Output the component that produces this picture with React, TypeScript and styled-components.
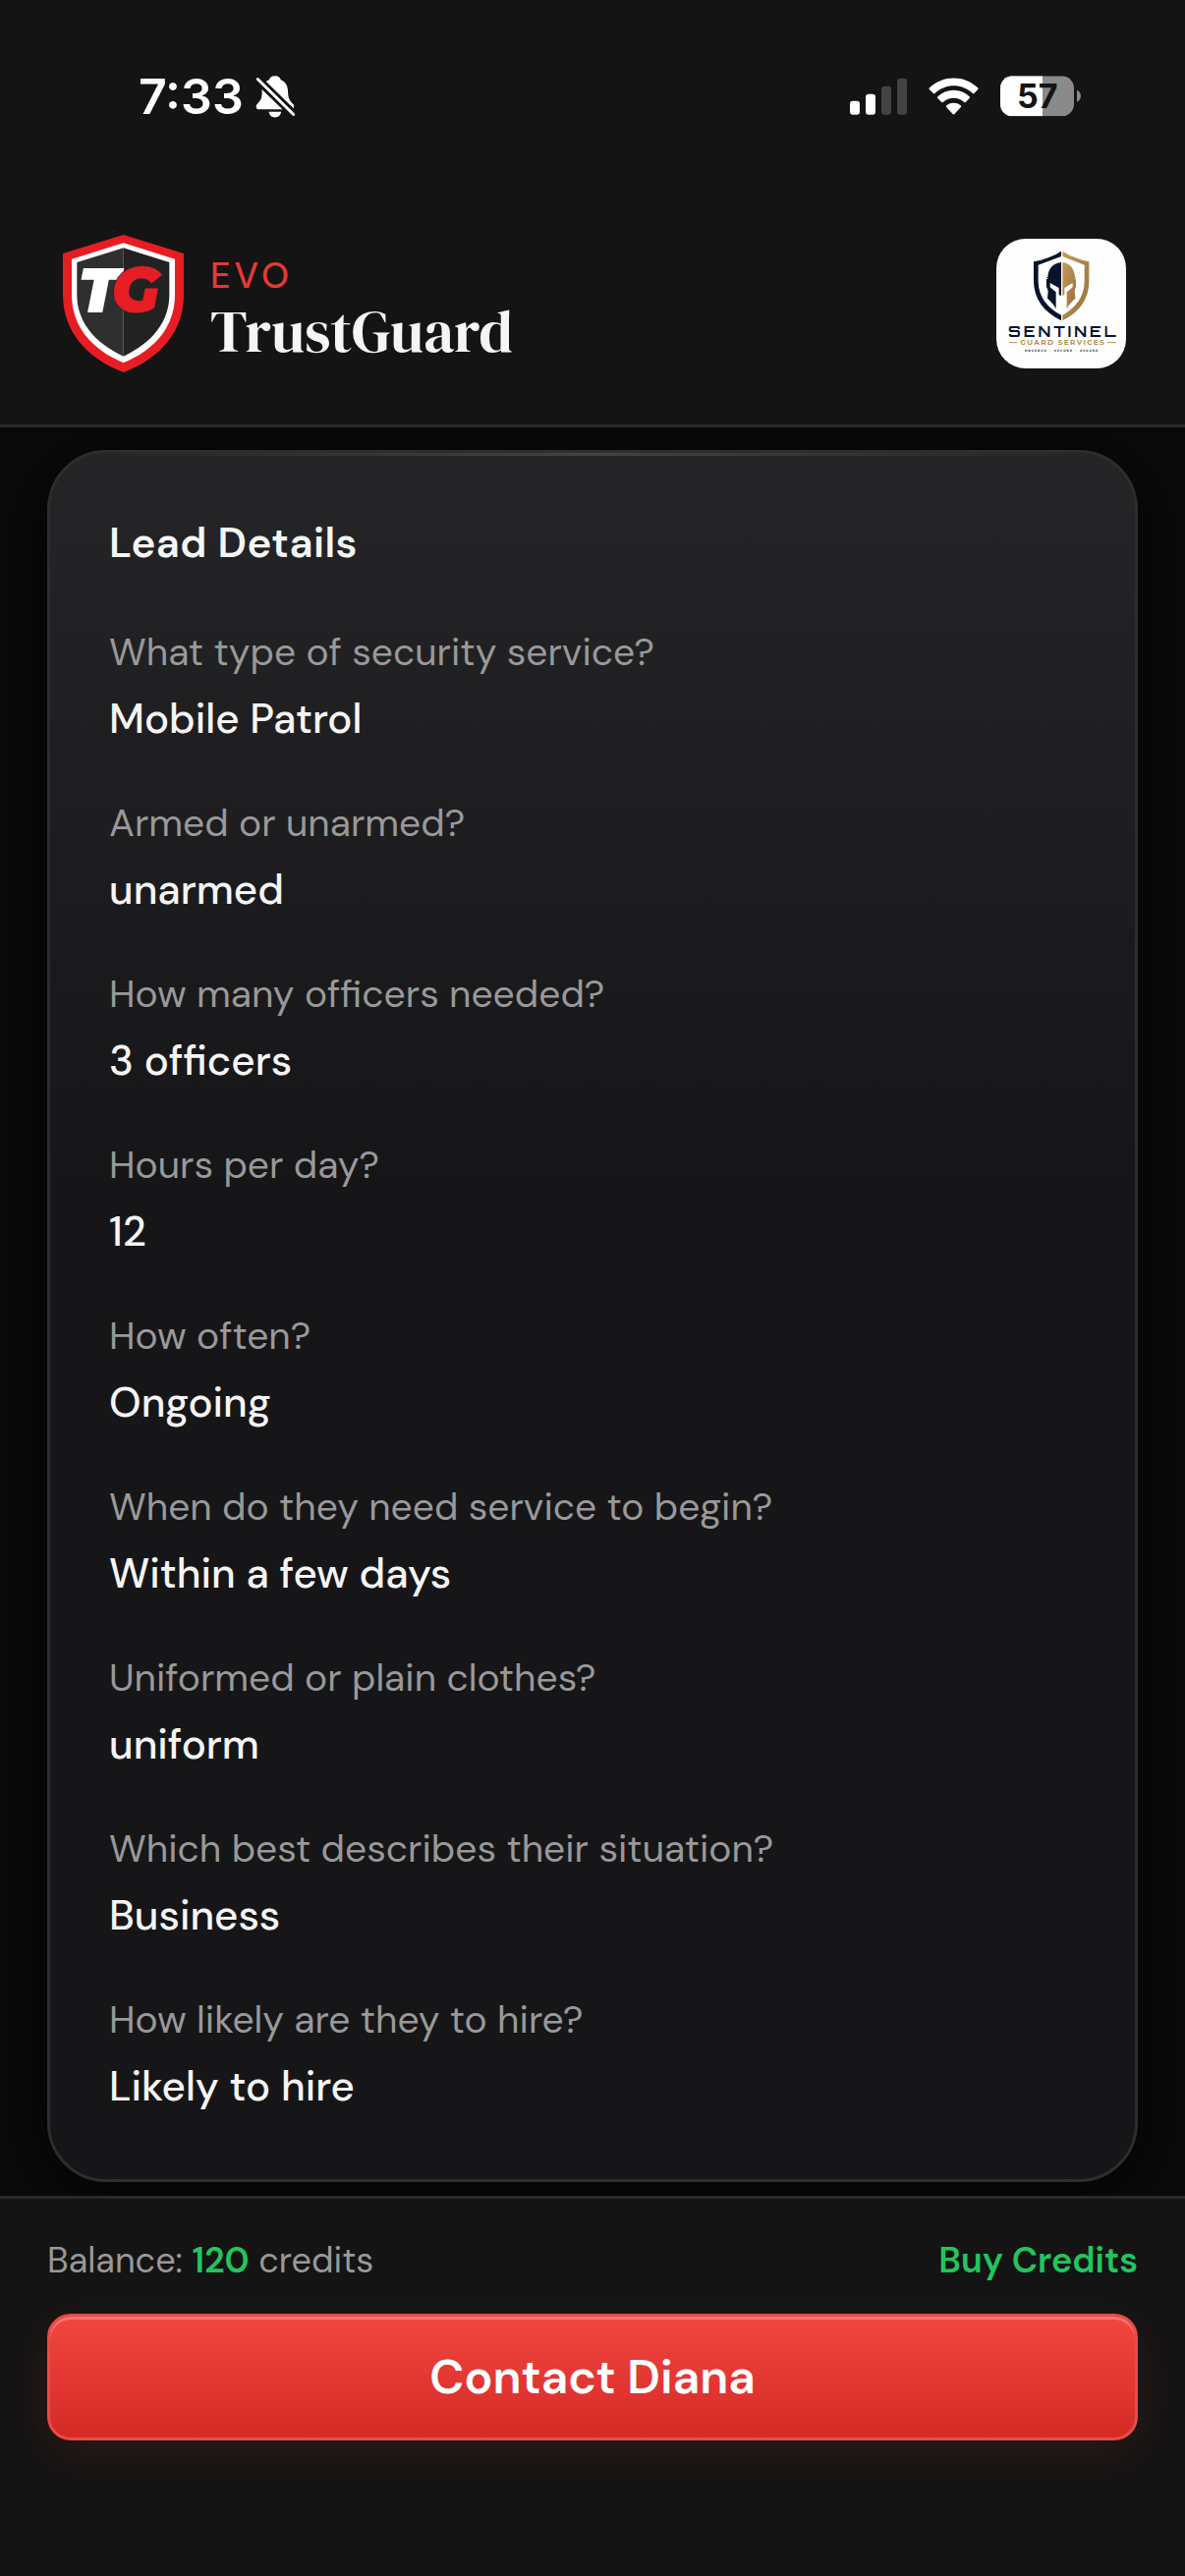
import React from "react";
import styled, { createGlobalStyle } from "styled-components";

const sans = `"DM Sans", Lato, "Open Sans", sans-serif`;
const system = `Inter, Roboto, sans-serif`;

const GlobalStyle = createGlobalStyle`
  *, *::before, *::after { box-sizing: border-box; }
  body {
    margin: 0;
    background: #0a0a0a;
    color: #f5f5f5;
    font-family: ${sans};
  }
`;

const Screen = styled.div`
  display: flex;
  flex-direction: column;
  min-height: 100vh;
`;

const TopArea = styled.header`
  position: relative;
  z-index: 1;
  background: #141414;
  border-bottom: 3px solid #292929;
`;

const StatusBar = styled.div`
  display: flex;
  align-items: center;
  justify-content: space-between;
  height: 195px;
  padding: 0 106px 0 141px;
`;

const StatusGroup = styled.div<{ $gap: number }>`
  display: flex;
  align-items: center;
  gap: ${(p) => p.$gap}px;
`;

const Clock = styled.time`
  font: 600 50px/60px ${system};
  color: #fff;
`;

const BrandBar = styled.div`
  display: flex;
  align-items: center;
  justify-content: space-between;
  padding: 44px 60px 53px;
`;

const Brand = styled.div`
  display: flex;
  align-items: center;
  gap: 24px;
`;

const BrandText = styled.div`
  display: flex;
  flex-direction: column;
  padding-top: 8px;
`;

const BrandKicker = styled.span`
  font-size: 36px;
  line-height: 48px;
  font-weight: 500;
  letter-spacing: 4px;
  color: #e53935;
`;

const BrandName = styled.span`
  font: 400 60px/64px "DM Serif Display", "Liberation Serif", serif;
  color: #f5f5f5;
`;

const ClientBadge = styled.div`
  display: flex;
  width: 132px;
  height: 132px;
  border-radius: 30px;
  background: #fefefe;
  overflow: hidden;
`;

const Main = styled.main`
  flex: 1;
  padding: 23px 48px 13px;
`;

const Card = styled.section`
  position: relative;
  padding: 60px 60px 63px;
  border: 3px solid #2d2d2f;
  border-radius: 60px;
  background: linear-gradient(180deg, #252527 0%, #161618 42%, #161618 100%);
  box-shadow: 0 12px 72px rgba(0, 0, 0, 0.7);

  &::before {
    content: "";
    position: absolute;
    top: 0;
    left: 42px;
    right: 42px;
    height: 3px;
    background: linear-gradient(90deg, transparent, #434345, transparent);
  }
`;

const CardTitle = styled.h2`
  margin: 0 0 50px;
  font-size: 42px;
  line-height: 64px;
  font-weight: 600;
  letter-spacing: 0.01em;
`;

const FieldList = styled.dl`
  display: flex;
  flex-direction: column;
  gap: 46px;
  margin: 0;
`;

const Field = styled.div`
  display: flex;
  flex-direction: column;
  gap: 8px;
`;

const Question = styled.dt`
  font-size: 39px;
  line-height: 58px;
  color: #999;
`;

const Answer = styled.dd`
  margin: 0;
  font-size: 42px;
  line-height: 62px;
  font-weight: 500;
`;

const ActionBar = styled.footer`
  position: relative;
  z-index: 1;
  display: flex;
  flex-direction: column;
  gap: 27px;
  padding: 36px 48px 138px;
  border-top: 3px solid #2a2a2a;
  background: #141414;
`;

const BalanceRow = styled.div`
  display: flex;
  justify-content: space-between;
  font-size: 36px;
  line-height: 54px;
`;

const Balance = styled.span`
  color: #999;

  strong {
    font-weight: 600;
    color: #22c55e;
  }
`;

const BuyLink = styled.a`
  color: #22c55e;
  font-weight: 600;
  text-decoration: none;
`;

const ContactButton = styled.button`
  height: 129px;
  padding: 0;
  border: 3px solid #e84b46;
  border-radius: 24px;
  background: linear-gradient(180deg, #f2463f 0%, #e53935 45%, #d42a26 100%);
  box-shadow: inset 0 3px 0 rgba(255, 255, 255, 0.26), 0 12px 48px rgba(229, 57, 53, 0.12);
  color: #fff;
  font: 600 48px/60px ${sans};
  cursor: pointer;
`;

const MutedBell = () => (
  <svg width="41" height="44" viewBox="480 78 124 132" role="img" aria-label="Silent mode">
    <path
      fill="#fff"
      d="M540 81C551 81 556 87 558 93C574 100 580 113 580 131C581 152 585 157 596 168C601 174 598 184 590 184H490C481 184 480 173 485 168C497 157 500 150 500 130C500 112 507 99 522 93C525 86 530 81 540 81Z"
    />
    <path fill="#fff" d="M521 192H559C557 204 550 209 540 209C530 209 523 204 521 192Z" />
    <path stroke="#141414" strokeWidth="26" d="M474 79L610 212" />
    <path stroke="#fff" strokeWidth="9" strokeLinecap="round" d="M487 91L597 200" />
  </svg>
);

const Signal = () => (
  <svg width="58" height="38" viewBox="75 85 174 114" role="img" aria-label="Signal">
    <rect x="75" y="156" width="30" height="42" rx="9" fill="#fff" />
    <rect x="123" y="135" width="30" height="63" rx="9" fill="#fff" />
    <rect x="171" y="111" width="30" height="87" rx="9" fill="#434343" />
    <rect x="219" y="87" width="30" height="111" rx="9" fill="#434343" />
  </svg>
);

const Wifi = () => (
  <svg width="51" height="38" viewBox="315 85 153 114" role="img" aria-label="Wi-Fi">
    <g fill="#fff">
      <path d="M318 116C360 77 424 77 465 116C468 118 467 120 465 122L455 132C453 134 451 134 449 132C416 102 368 102 335 132C333 134 331 134 329 132L318 122C316 120 316 118 318 116Z" />
      <path d="M344 142C372 117 412 117 439 142C442 144 442 146 440 148L429 159C427 161 425 161 423 159C404 143 379 143 360 159C358 161 356 161 354 159L343 148C341 146 342 144 344 142Z" />
      <path d="M370 170C383 160 401 160 413 170C415 172 415 174 413 176L395 195C393 198 390 198 388 195L370 176C368 174 368 172 370 170Z" />
    </g>
  </svg>
);

const Battery = () => (
  <svg width="82" height="42" viewBox="534 80 246 126" role="img" aria-label="Battery">
    <defs>
      <clipPath id="battery-shell">
        <rect x="534" y="81" width="225" height="123" rx="37" />
      </clipPath>
    </defs>
    <g clipPath="url(#battery-shell)">
      <rect x="534" y="81" width="225" height="123" fill="#8a8a8a" />
      <rect x="534" y="81" width="129" height="123" fill="#fff" />
    </g>
    <path fill="#8a8a8a" d="M768 124C784 130 784 154 768 160Z" />
    <text x="647" y="180" textAnchor="middle" fontFamily="Inter, sans-serif" fontWeight="700" fontSize="102" fill="#141414">
      57
    </text>
  </svg>
);

const ShieldLogo = () => (
  <svg width="130" height="140" viewBox="60 57 390 420" role="img" aria-label="TrustGuard logo">
    <path fill="#e71d24" d="M257 57L441 114V240C441 350 372 433 257 477C142 433 72 350 72 240V114Z" />
    <path fill="#fff" d="M257 82L414 131V240C414 334 357 406 257 448C157 406 99 334 99 240V131Z" />
    <path fill="#2f2f2f" d="M257 97V428C167 386 115 322 115 240V141Z" />
    <path fill="#222" d="M257 97L397 141V240C397 322 345 386 257 428Z" />
    <text x="118" y="293" fontFamily="Montserrat, Inter, sans-serif" fontWeight="900" fontStyle="italic" fontSize="192" fill="#fff">
      T
      <tspan dx="-24" fill="#e71d24" stroke="#2a2a2a" strokeWidth="4" paintOrder="stroke">
        G
      </tspan>
    </text>
  </svg>
);

const SentinelLogo = () => (
  <svg width="132" height="132" viewBox="72 69 396 396" role="img" aria-label="Sentinel Guard Services">
    <defs>
      <linearGradient id="gold" x1="0" y1="0" x2="1" y2="1">
        <stop offset="0" stopColor="#c49a5a" />
        <stop offset="1" stopColor="#97703a" />
      </linearGradient>
    </defs>
    <g fill="#07142b">
      <path d="M270 107V123L200 149V200C201 245 226 279 270 302V319C216 292 187 252 186 200V139C217 133 245 123 270 107Z" />
      <path d="M270 141V243L263 240V219L236 204V217L254 232V283C248 270 237 259 228 251L230 229L225 215V192H231L224 187H229C230 160 246 143 270 141Z" />
    </g>
    <g fill="url(#gold)">
      <path d="M274 107V123L341 149V200C340 245 316 279 274 302V319C328 292 354 252 355 200V139C327 133 299 123 274 107Z" />
      <path d="M274 141V243L280 240V219L305 204V217L287 232V283C293 270 304 259 313 251L311 229L315 215V192H309L317 187H312C311 160 296 143 274 141Z" />
    </g>
    <g textAnchor="middle" fontFamily="'DejaVu Sans', sans-serif" fontWeight="700">
      <text x="277" y="368" fontFamily="Orbitron, 'DejaVu Sans', sans-serif" fontSize="46" letterSpacing="9" fill="#07142b">SENTINEL</text>
      <text x="275" y="393" fontFamily="Montserrat, Lato, sans-serif" fontSize="22" letterSpacing="4" fill="#b98f52">GUARD SERVICES</text>
      <text x="272" y="413" fontSize="9" letterSpacing="3" fill="#2b3548">
        OBSERVE <tspan fill="#b98f52">•</tspan> SECURE <tspan fill="#b98f52">•</tspan> ASSURE
      </text>
    </g>
    <path stroke="#b98f52" strokeWidth="3" d="M110 386H136M411 386H437" />
  </svg>
);

const fields = [
  ["What type of security service?", "Mobile Patrol"],
  ["Armed or unarmed?", "unarmed"],
  ["How many officers needed?", "3 officers"],
  ["Hours per day?", "12"],
  ["How often?", "Ongoing"],
  ["When do they need service to begin?", "Within a few days"],
  ["Uniformed or plain clothes?", "uniform"],
  ["Which best describes their situation?", "Business"],
  ["How likely are they to hire?", "Likely to hire"],
];

export default function App() {
  return (
    <Screen>
      <GlobalStyle />
      <TopArea>
        <StatusBar>
          <StatusGroup $gap={12}>
            <Clock>7:33</Clock>
            <MutedBell />
          </StatusGroup>
          <StatusGroup $gap={22}>
            <Signal />
            <Wifi />
            <Battery />
          </StatusGroup>
        </StatusBar>
        <BrandBar>
          <Brand>
            <ShieldLogo />
            <BrandText>
              <BrandKicker>EVO</BrandKicker>
              <BrandName>TrustGuard</BrandName>
            </BrandText>
          </Brand>
          <ClientBadge>
            <SentinelLogo />
          </ClientBadge>
        </BrandBar>
      </TopArea>
      <Main>
        <Card>
          <CardTitle>Lead Details</CardTitle>
          <FieldList>
            {fields.map(([question, answer]) => (
              <Field key={question}>
                <Question>{question}</Question>
                <Answer>{answer}</Answer>
              </Field>
            ))}
          </FieldList>
        </Card>
      </Main>
      <ActionBar>
        <BalanceRow>
          <Balance>
            Balance: <strong>120</strong> credits
          </Balance>
          <BuyLink href="#credits">Buy Credits</BuyLink>
        </BalanceRow>
        <ContactButton type="button">Contact Diana</ContactButton>
      </ActionBar>
    </Screen>
  );
}
